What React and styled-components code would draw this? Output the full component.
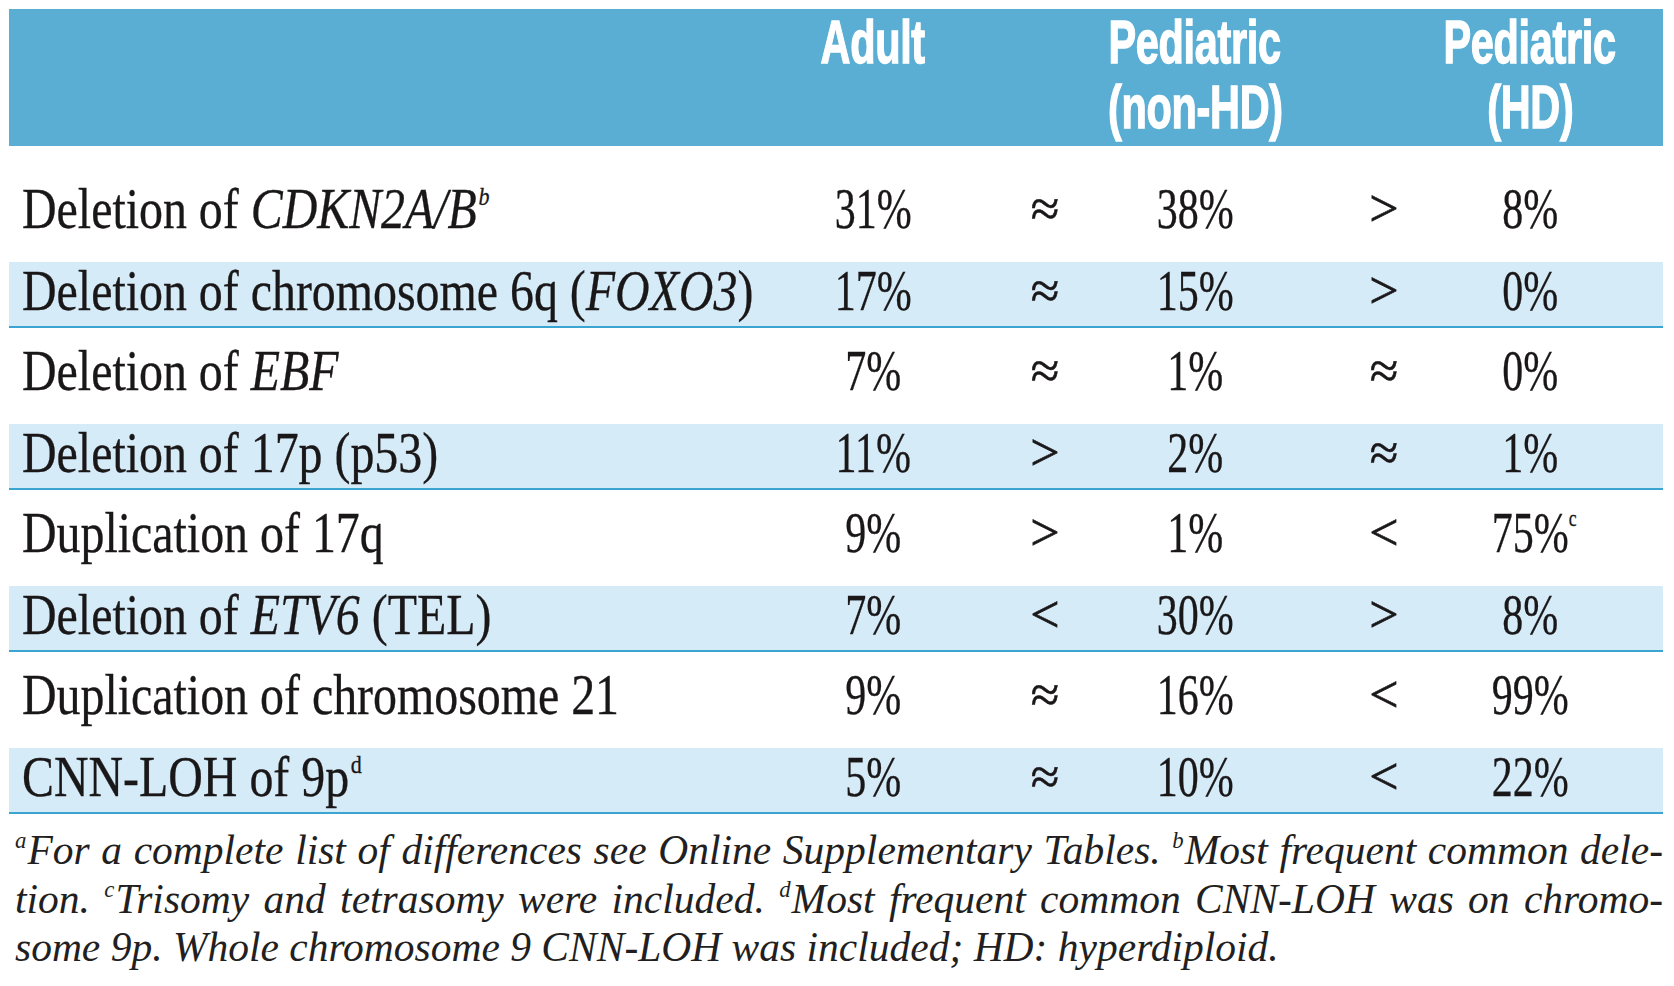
import React from "react";
import styled, { createGlobalStyle } from "styled-components";

const COLUMNS = "778px 172px 172px 128px 250px 42px";

// built lazily: the styled parts are declared further down
const getRows = () => [
  {
    label: (
      <>
        Deletion of <Gene>CDKN2A/B</Gene>
        <Sup $italic>b</Sup>
      </>
    ),
    values: ["31%", "≈", "38%", ">", "8%"],
  },
  {
    label: (
      <>
        Deletion of chromosome 6q (<Gene>FOXO3</Gene>)
      </>
    ),
    values: ["17%", "≈", "15%", ">", "0%"],
  },
  {
    label: (
      <>
        Deletion of <Gene>EBF</Gene>
      </>
    ),
    values: ["7%", "≈", "1%", "≈", "0%"],
  },
  { label: "Deletion of 17p (p53)", values: ["11%", ">", "2%", "≈", "1%"] },
  {
    label: "Duplication of 17q",
    values: ["9%", ">", "1%", "<", "75%"],
    lastSup: "c",
  },
  {
    label: (
      <>
        Deletion of <Gene>ETV6</Gene> (TEL)
      </>
    ),
    values: ["7%", "<", "30%", ">", "8%"],
  },
  {
    label: "Duplication of chromosome 21",
    values: ["9%", "≈", "16%", "<", "99%"],
  },
  {
    label: (
      <>
        CNN-LOH of 9p<Sup>d</Sup>
      </>
    ),
    values: ["5%", "≈", "10%", "<", "22%"],
  },
];

const headers = [["Adult"], [], ["Pediatric", "(non-HD)"], [], ["Pediatric", "(HD)"]];

const isSymbol = v => v === "≈" || v === "<" || v === ">";

const App = () => {
  const rows = getRows();

  return (
    <>
      <GlobalStyle />
      <Page>
        <Header>
          <div />
          {headers.map((lines, i) => (
            <HeadCell key={i}>
              {lines.map(line => (
                <HeadLine key={line}>{line}</HeadLine>
              ))}
            </HeadCell>
          ))}
        </Header>

        {rows.map((row, i) => (
          <Row key={i} $shaded={i % 2 === 1} $first={i === 0}>
            <LabelCell>
              <Squeeze $x={0.855} $origin="left">
                {row.label}
              </Squeeze>
            </LabelCell>
            {row.values.map((v, j) => (
              <Cell key={j}>
                {isSymbol(v) ? (
                  <Symbol>{v}</Symbol>
                ) : (
                  <Squeeze $x={0.75}>
                    {v}
                    {j === 4 && row.lastSup && <ValueSup>{row.lastSup}</ValueSup>}
                  </Squeeze>
                )}
              </Cell>
            ))}
          </Row>
        ))}

        <Notes>
          <NoteLine>
            <NoteSup>a</NoteSup>For a complete list of differences see Online
            Supplementary Tables. <NoteSup>b</NoteSup>Most frequent common dele-
          </NoteLine>
          <NoteLine>
            tion. <NoteSup>c</NoteSup>Trisomy and tetrasomy were included.{" "}
            <NoteSup>d</NoteSup>Most frequent common CNN-LOH was on chromo-
          </NoteLine>
          <NoteLine $last>
            some 9p. Whole chromosome 9 CNN-LOH was included; HD: hyperdiploid.
          </NoteLine>
        </Notes>
      </Page>
    </>
  );
};

export default App;

const GlobalStyle = createGlobalStyle`
  html, body {
    margin: 0;
    padding: 0;
    background: #ffffff;
  }
  body {
    font-family: "Liberation Serif", "Times New Roman", serif;
    color: #1a1718;
  }
`;

const Page = styled.div`
  width: 1654px;
  padding: 9px 11px 0 9px;
`;

const Header = styled.div`
  display: grid;
  grid-template-columns: ${COLUMNS};
  padding-right: 112px;
  height: 137px;
  background-color: #5aaed3;
  color: #ffffff;
  font-family: "Liberation Sans", Arial, sans-serif;
  font-weight: 700;
  font-size: 61px;
  line-height: 65px;
`;

const HeadCell = styled.div`
  display: flex;
  flex-direction: column;
  align-items: center;
  padding-top: 1px;
  white-space: nowrap;
`;

const HeadLine = styled.span`
  display: inline-block;
  transform: scaleX(0.68);
  letter-spacing: -0.5px;
  -webkit-text-stroke: 1.4px #ffffff;
`;

const Row = styled.div`
  display: grid;
  grid-template-columns: ${COLUMNS};
  align-items: center;
  box-sizing: border-box;
  padding-right: 112px;
  margin-top: ${p => (p.$first ? "20px" : "0")};
  height: ${p => (p.$shaded ? "66px" : "96px")};
  padding-bottom: ${p => (p.$shaded ? "6px" : "10px")};
  background-color: ${p => (p.$shaded ? "#d6ebf8" : "transparent")};
  border-bottom: ${p => (p.$shaded ? "2px solid #3ba5d2" : "none")};
  font-size: 56px;
  line-height: 1;
`;

const LabelCell = styled.div`
  padding-left: 13px;
  white-space: nowrap;
`;

const Cell = styled.div`
  display: flex;
  justify-content: center;
  white-space: nowrap;
`;

const Squeeze = styled.span`
  position: relative;
  display: inline-block;
  white-space: nowrap;
  transform: scaleX(${p => p.$x});
  transform-origin: ${p => p.$origin || "center"};
  -webkit-text-stroke: 0.3px currentColor;
`;

const Symbol = styled.span`
  display: inline-block;
  font-size: 52px;
  -webkit-text-stroke: 0.6px currentColor;
`;

const Gene = styled.i`
  font-style: italic;
`;

const Sup = styled.sup`
  font-size: 0.46em;
  font-style: ${p => (p.$italic ? "italic" : "normal")};
  vertical-align: 0.9em;
  line-height: 0;
  margin-left: 2px;
`;

const ValueSup = styled.sup`
  position: absolute;
  left: 100%;
  top: 0.1em;
  font-size: 0.42em;
  line-height: 1;
`;

const Notes = styled.div`
  margin-top: 12px;
  padding-left: 6px;
  font-style: italic;
  font-size: 41.5px;
  line-height: 48.5px;
  color: #231f20;
`;

const NoteLine = styled.div`
  text-align: ${p => (p.$last ? "left" : "justify")};
  text-align-last: ${p => (p.$last ? "left" : "justify")};
  white-space: ${p => (p.$last ? "nowrap" : "normal")};
`;

const NoteSup = styled.sup`
  font-size: 0.55em;
  vertical-align: 0.7em;
  line-height: 0;
  margin-right: 1px;
`;
